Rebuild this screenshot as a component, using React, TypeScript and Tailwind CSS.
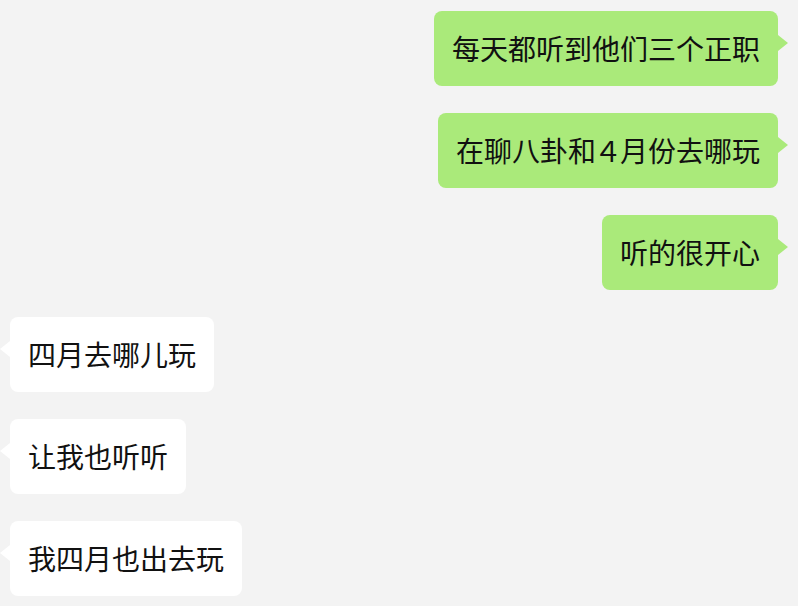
import React from "react";

type Msg = { text: React.ReactNode; mine: boolean };

const msgs: Msg[] = [
  { text: "每天都听到他们三个正职", mine: true },
  {
    text: (
      <>
        在聊八卦和<span className="-mx-[2px]">４</span>月份去哪玩
      </>
    ),
    mine: true,
  },
  { text: "听的很开心", mine: true },
  { text: "四月去哪儿玩", mine: false },
  { text: "让我也听听", mine: false },
  { text: "我四月也出去玩", mine: false },
];

function Bubble({ text, mine }: Msg) {
  return (
    <div className={mine ? "flex justify-end" : "flex justify-start"}>
      <div
        className={
          mine
            ? "relative rounded-[8px] bg-[#aaea7a] px-[18px] py-[18px] text-[28px] leading-[39px] text-[#111111] whitespace-nowrap"
            : "relative rounded-[8px] bg-white px-[18px] py-[18px] text-[28px] leading-[39px] text-[#111111] whitespace-nowrap"
        }
      >
        {mine ? (
          <span className="absolute right-[-10px] top-[24px] h-0 w-0 border-y-[8px] border-l-[10px] border-y-transparent border-l-[#aaea7a]" />
        ) : (
          <span className="absolute left-[-10px] top-[24px] h-0 w-0 border-y-[8px] border-r-[10px] border-y-transparent border-r-white" />
        )}
        {text}
      </div>
    </div>
  );
}

export default function App() {
  return (
    <div
      className="min-h-[606px] w-[798px] bg-[#f3f3f3] pl-[10px] pr-[20px] pt-[11px] flex flex-col gap-[27px]"
      style={{ fontFamily: '"Noto Sans CJK SC", "Noto Sans", sans-serif' }}
    >
      {msgs.map((m, i) => (
        <Bubble key={i} {...m} />
      ))}
    </div>
  );
}
